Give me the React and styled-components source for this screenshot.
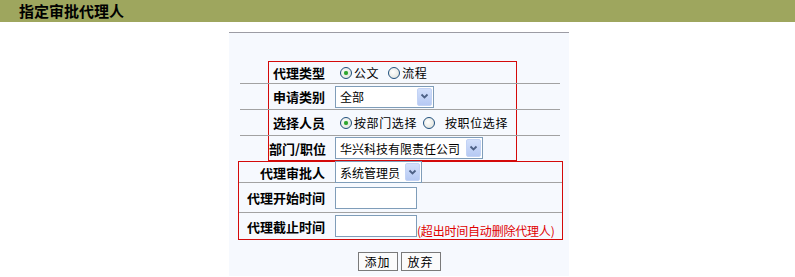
import styled, { createGlobalStyle } from "styled-components";

const Global = createGlobalStyle`
body {
  margin: 0;
  background: #ffffff;
  font-family: "Noto Sans CJK SC", "Liberation Sans", sans-serif;
  font-size: 12px;
  color: #000;
}
`

const TitleBar = styled.div`
height: 22px;
background-color: #9ea65e;
display: flex;
align-items: center;
padding-left: 19px;
font-size: 15px;
font-weight: bold;
line-height: 22px;
`

const Panel = styled.div`
width: 340px;
height: 244px;
margin: 10px 0 0 229px;
border-top: 1px solid #9c9ca4;
background-color: #f6f9fe;
padding-top: 28px;
box-sizing: border-box;
`

const Group = styled.div`
box-sizing: border-box;
width: ${p => p.$width}px;
margin-left: ${p => p.$left}px;
border: 1px solid #d40a0a;
`

const Row = styled.div`
box-sizing: border-box;
display: flex;
align-items: center;
height: ${p => p.$h}px;
margin: ${p => p.$m || "0"};
padding: ${p => p.$pad || "0"};
border-bottom: ${p => (p.$line ? "1px solid #a2a2a2" : "none")};
`

const Label = styled.div`
font-weight: bold;
font-size: 13px;
white-space: nowrap;
width: ${p => p.$w}px;
text-align: ${p => p.$align || "left"};
padding-right: ${p => p.$pr || 0}px;
box-sizing: border-box;
flex-shrink: 0;
`

const Radios = styled.div`
display: flex;
align-items: center;
white-space: nowrap;
`

const RadioCircle = styled.span`
width: 12px;
height: 12px;
box-sizing: border-box;
border-radius: 50%;
border: 1px solid #1f4f7d;
background: radial-gradient(circle at 40% 40%, #ffffff 0%, #e6e8e2 70%, #d9dcd0 100%);
display: inline-flex;
align-items: center;
justify-content: center;
margin-right: ${p => p.$gap}px;
&::after {
  content: "";
  width: 4px;
  height: 4px;
  border-radius: 50%;
  background: ${p => (p.$checked ? "#2fa32f" : "transparent")};
  box-shadow: ${p => (p.$checked ? "0 0 1px #5fd05f" : "none")};
}
`

const RadioText = styled.span`
font-size: 12px;
letter-spacing: 0.6px;
margin-right: ${p => p.$mr}px;
`

const SelectBox = styled.div`
display: flex;
align-items: center;
box-sizing: border-box;
width: ${p => p.$w}px;
height: 22px;
border: 1px solid #7f9db9;
background: #fff;
padding: 1px;
`

const SelectText = styled.span`
flex: 1;
padding-left: 3px;
font-size: 12px;
white-space: nowrap;
overflow: hidden;
`

const Arrow = styled.span`
width: 15px;
height: 18px;
flex-shrink: 0;
box-sizing: border-box;
background: linear-gradient(#d3e0fb, #b6c9f3);
border: 1px solid #c3d3f5;
border-radius: 2px;
display: flex;
align-items: center;
justify-content: center;
`

const TextInput = styled.input`
box-sizing: border-box;
width: 82px;
height: 22px;
border: 1px solid #7f9db9;
background: #fff;
margin: 0;
padding: 0 2px;
`

const Note = styled.span`
color: #e00000;
font-size: 12px;
letter-spacing: -0.2px;
white-space: nowrap;
margin-top: 8px;
`

const Buttons = styled.div`
display: flex;
justify-content: center;
gap: 3px;
margin-top: 12px;
`

const Button = styled.button`
box-sizing: border-box;
height: 19px;
width: 40px;
padding: 0;
border: 1px solid #7a7a7a;
background: #fbfbfb;
font-family: "Noto Sans CJK SC", "Liberation Sans", sans-serif;
font-size: 12px;
letter-spacing: 1px;
line-height: 17px;
color: #000;
`

function Radio({ checked, label, gap, mr }) {
  return <>
    <RadioCircle $checked={checked} $gap={gap} />
    <RadioText $mr={mr}>{label}</RadioText>
  </>
}

function Select({ width, value }) {
  return <SelectBox $w={width}>
    <SelectText>{value}</SelectText>
    <Arrow>
      <svg width="9" height="7" viewBox="0 0 9 7">
        <path d="M1.5 1.5 L4.5 4.5 L7.5 1.5" fill="none" stroke="#4d6185" strokeWidth="1.8" />
      </svg>
    </Arrow>
  </SelectBox>
}

export default function App() {
  return <>
    <Global />
    <TitleBar>指定审批代理人</TitleBar>
    <Panel>
      <Group $left={39} $width={249}>
        <Row $h={22} $line $m="0 -44px 0 -29px" $pad="0 0 0 33px">
          <Label $w={67}>代理类型</Label>
          <Radios>
            <Radio checked label="公文" gap={2} mr={9} />
            <Radio label="流程" gap={2} mr={0} />
          </Radios>
        </Row>
        <Row $h={26} $line $m="0 -44px 0 -29px" $pad="0 0 0 33px">
          <Label $w={62}>申请类别</Label>
          <Select width={99} value="全部" />
        </Row>
        <Row $h={26} $line $m="0 -44px 0 -29px" $pad="0 0 0 33px">
          <Label $w={67}>选择人员</Label>
          <Radios>
            <Radio checked label="按部门选择" gap={2} mr={6} />
            <Radio label="按职位选择" gap={10} mr={0} />
          </Radios>
        </Row>
        <Row $h={24} $m="0 -44px 0 -29px" $pad="0 0 0 29px">
          <Label $w={66}>部门/职位</Label>
          <Select width={148} value="华兴科技有限责任公司" />
        </Row>
      </Group>
      <Group $left={9} $width={325}>
        <Row $h={21} $line>
          <Label $w={96} $align="right" $pr={10}>代理审批人</Label>
          <Select width={87} value="系统管理员" />
        </Row>
        <Row $h={30} $line>
          <Label $w={96} $align="right" $pr={10}>代理开始时间</Label>
          <TextInput />
        </Row>
        <Row $h={26}>
          <Label $w={96} $align="right" $pr={10}>代理截止时间</Label>
          <TextInput />
          <Note>(超出时间自动删除代理人)</Note>
        </Row>
      </Group>
      <Buttons>
        <Button>添加</Button>
        <Button>放弃</Button>
      </Buttons>
    </Panel>
  </>
}
